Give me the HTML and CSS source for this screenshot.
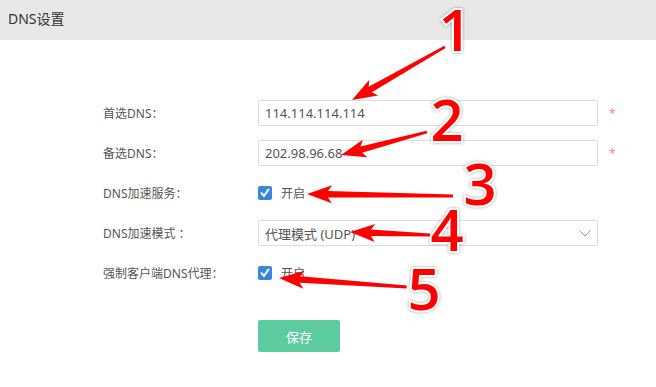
FILE: index.html
```html
<!DOCTYPE html>
<html lang="zh-CN">
<head>
  <meta charset="UTF-8" />
  <title>DNS设置</title>
  <link rel="stylesheet" href="styles.css">
</head>
<body>
  <div class="page">
    <div class="header">DNS设置</div>

    <div class="form">
      <div class="row">
        <label class="label">首选DNS：</label>
        <input class="field" type="text" value="114.114.114.114" />
        <span class="req">*</span>
      </div>
      <div class="row">
        <label class="label">备选DNS：</label>
        <input class="field" type="text" value="202.98.96.68" />
        <span class="req">*</span>
      </div>
      <div class="row">
        <label class="label">DNS加速服务：</label>
        <div class="check">
          <span class="box"><svg width="14" height="14" viewBox="0 0 14 14"><path d="M3.5 7.2 L6 10 L10.5 3.5" fill="none" stroke="#fff" stroke-width="2" stroke-linecap="round" stroke-linejoin="round"/></svg></span>
          <span>开启</span>
        </div>
      </div>
      <div class="row">
        <label class="label">DNS加速模式 ：</label>
        <div class="field select">
          <span>代理模式 (UDP)</span>
          <svg width="12" height="7" viewBox="0 0 12 7"><path d="M0.5 0.5 L6 6 L11.5 0.5" fill="none" stroke="#999" stroke-width="1"/></svg>
        </div>
      </div>
      <div class="row">
        <label class="label">强制客户端DNS代理：</label>
        <div class="check">
          <span class="box"><svg width="14" height="14" viewBox="0 0 14 14"><path d="M3.5 7.2 L6 10 L10.5 3.5" fill="none" stroke="#fff" stroke-width="2" stroke-linecap="round" stroke-linejoin="round"/></svg></span>
          <span>开启</span>
        </div>
      </div>

      <div class="actions">
        <button class="save">保存</button>
      </div>
    </div>

    <!-- annotation layer -->
    <svg class="marks" width="656" height="387" viewBox="0 0 656 387">
      <g fill="#ff0000">
        <polygon transform="translate(352 100) rotate(-29.7)" points="0,0 25,-9 21,-3.2 107,-1.3 107,1.3 21,3.2 25,9" />
        <polygon transform="translate(341 155) rotate(-15)" points="0,0 25,-9 21,-3.2 89,-1.3 89,1.3 21,3.2 25,9" />
        <polygon transform="translate(307 194) rotate(0.8)" points="0,0 25,-9 21,-3.2 146,-1.5 146,1.5 21,3.2 25,9" />
        <polygon transform="translate(350 232) rotate(2.1)" points="0,0 25,-9 21,-3.2 80,-1.5 80,1.5 21,3.2 25,9" />
        <polygon transform="translate(279 278) rotate(4)" points="0,0 25,-9 21,-3.2 128,-1.5 128,1.5 21,3.2 25,9" />
      </g>
      <g class="num">
        <text x="455" y="51">1</text>
        <text x="447" y="141">2</text>
        <text x="480" y="205">3</text>
        <text x="447" y="251">4</text>
        <text x="424" y="310">5</text>
      </g>
    </svg>
  </div>
</body>
</html>
```

FILE: styles.css
```css
body {
  margin: 0;
  font-family: "Noto Sans", "Noto Sans CJK SC", sans-serif;
  color: #555;
  background: #fff;
}
.page {
  position: relative;
  width: 656px;
  height: 387px;
  overflow: hidden;
}
.header {
  height: 40px;
  line-height: 38px;
  padding-left: 8px;
  background: #e8e8e8;
  font-size: 14px;
  color: #333;
}
.form {
  padding-top: 53px;
  padding-left: 103px;
}
.row {
  display: grid;
  grid-template-columns: 155px 340px auto;
  align-items: center;
  height: 40px;
  font-size: 12px;
}
.label {
  color: #555;
}
.field {
  box-sizing: border-box;
  height: 26px;
  width: 340px;
  padding: 0 6px;
  border: 1px solid #ddd;
  border-radius: 2px;
  font-family: inherit;
  font-size: 13px;
  color: #555;
  outline: none;
}
.select {
  display: flex;
  align-items: center;
  justify-content: space-between;
  padding-right: 6px;
}
.req {
  margin-left: 11px;
  color: #f08a8a;
  font-size: 12px;
}
.check {
  display: flex;
  align-items: center;
  gap: 9px;
  font-size: 12px;
}
.box {
  display: block;
  width: 14px;
  height: 14px;
  border-radius: 2px;
  background: #3b86d8;
}
.box svg {
  display: block;
}
.actions {
  padding-top: 27px;
  padding-left: 155px;
}
.save {
  width: 82px;
  height: 32px;
  border: none;
  border-radius: 2px;
  background: #5ccb9e;
  color: #fff;
  font-family: inherit;
  font-size: 13px;
  cursor: pointer;
}
.marks {
  position: absolute;
  left: 0;
  top: 0;
  pointer-events: none;
}
.num text {
  font-family: "Open Sans", sans-serif;
  font-size: 58px;
  font-weight: 600;
  fill: #ff0000;
  stroke: #fff;
  stroke-width: 4px;
  paint-order: stroke;
  text-anchor: middle;
  filter: drop-shadow(0 0 1.5px rgba(0, 0, 0, 0.35));
}
```
